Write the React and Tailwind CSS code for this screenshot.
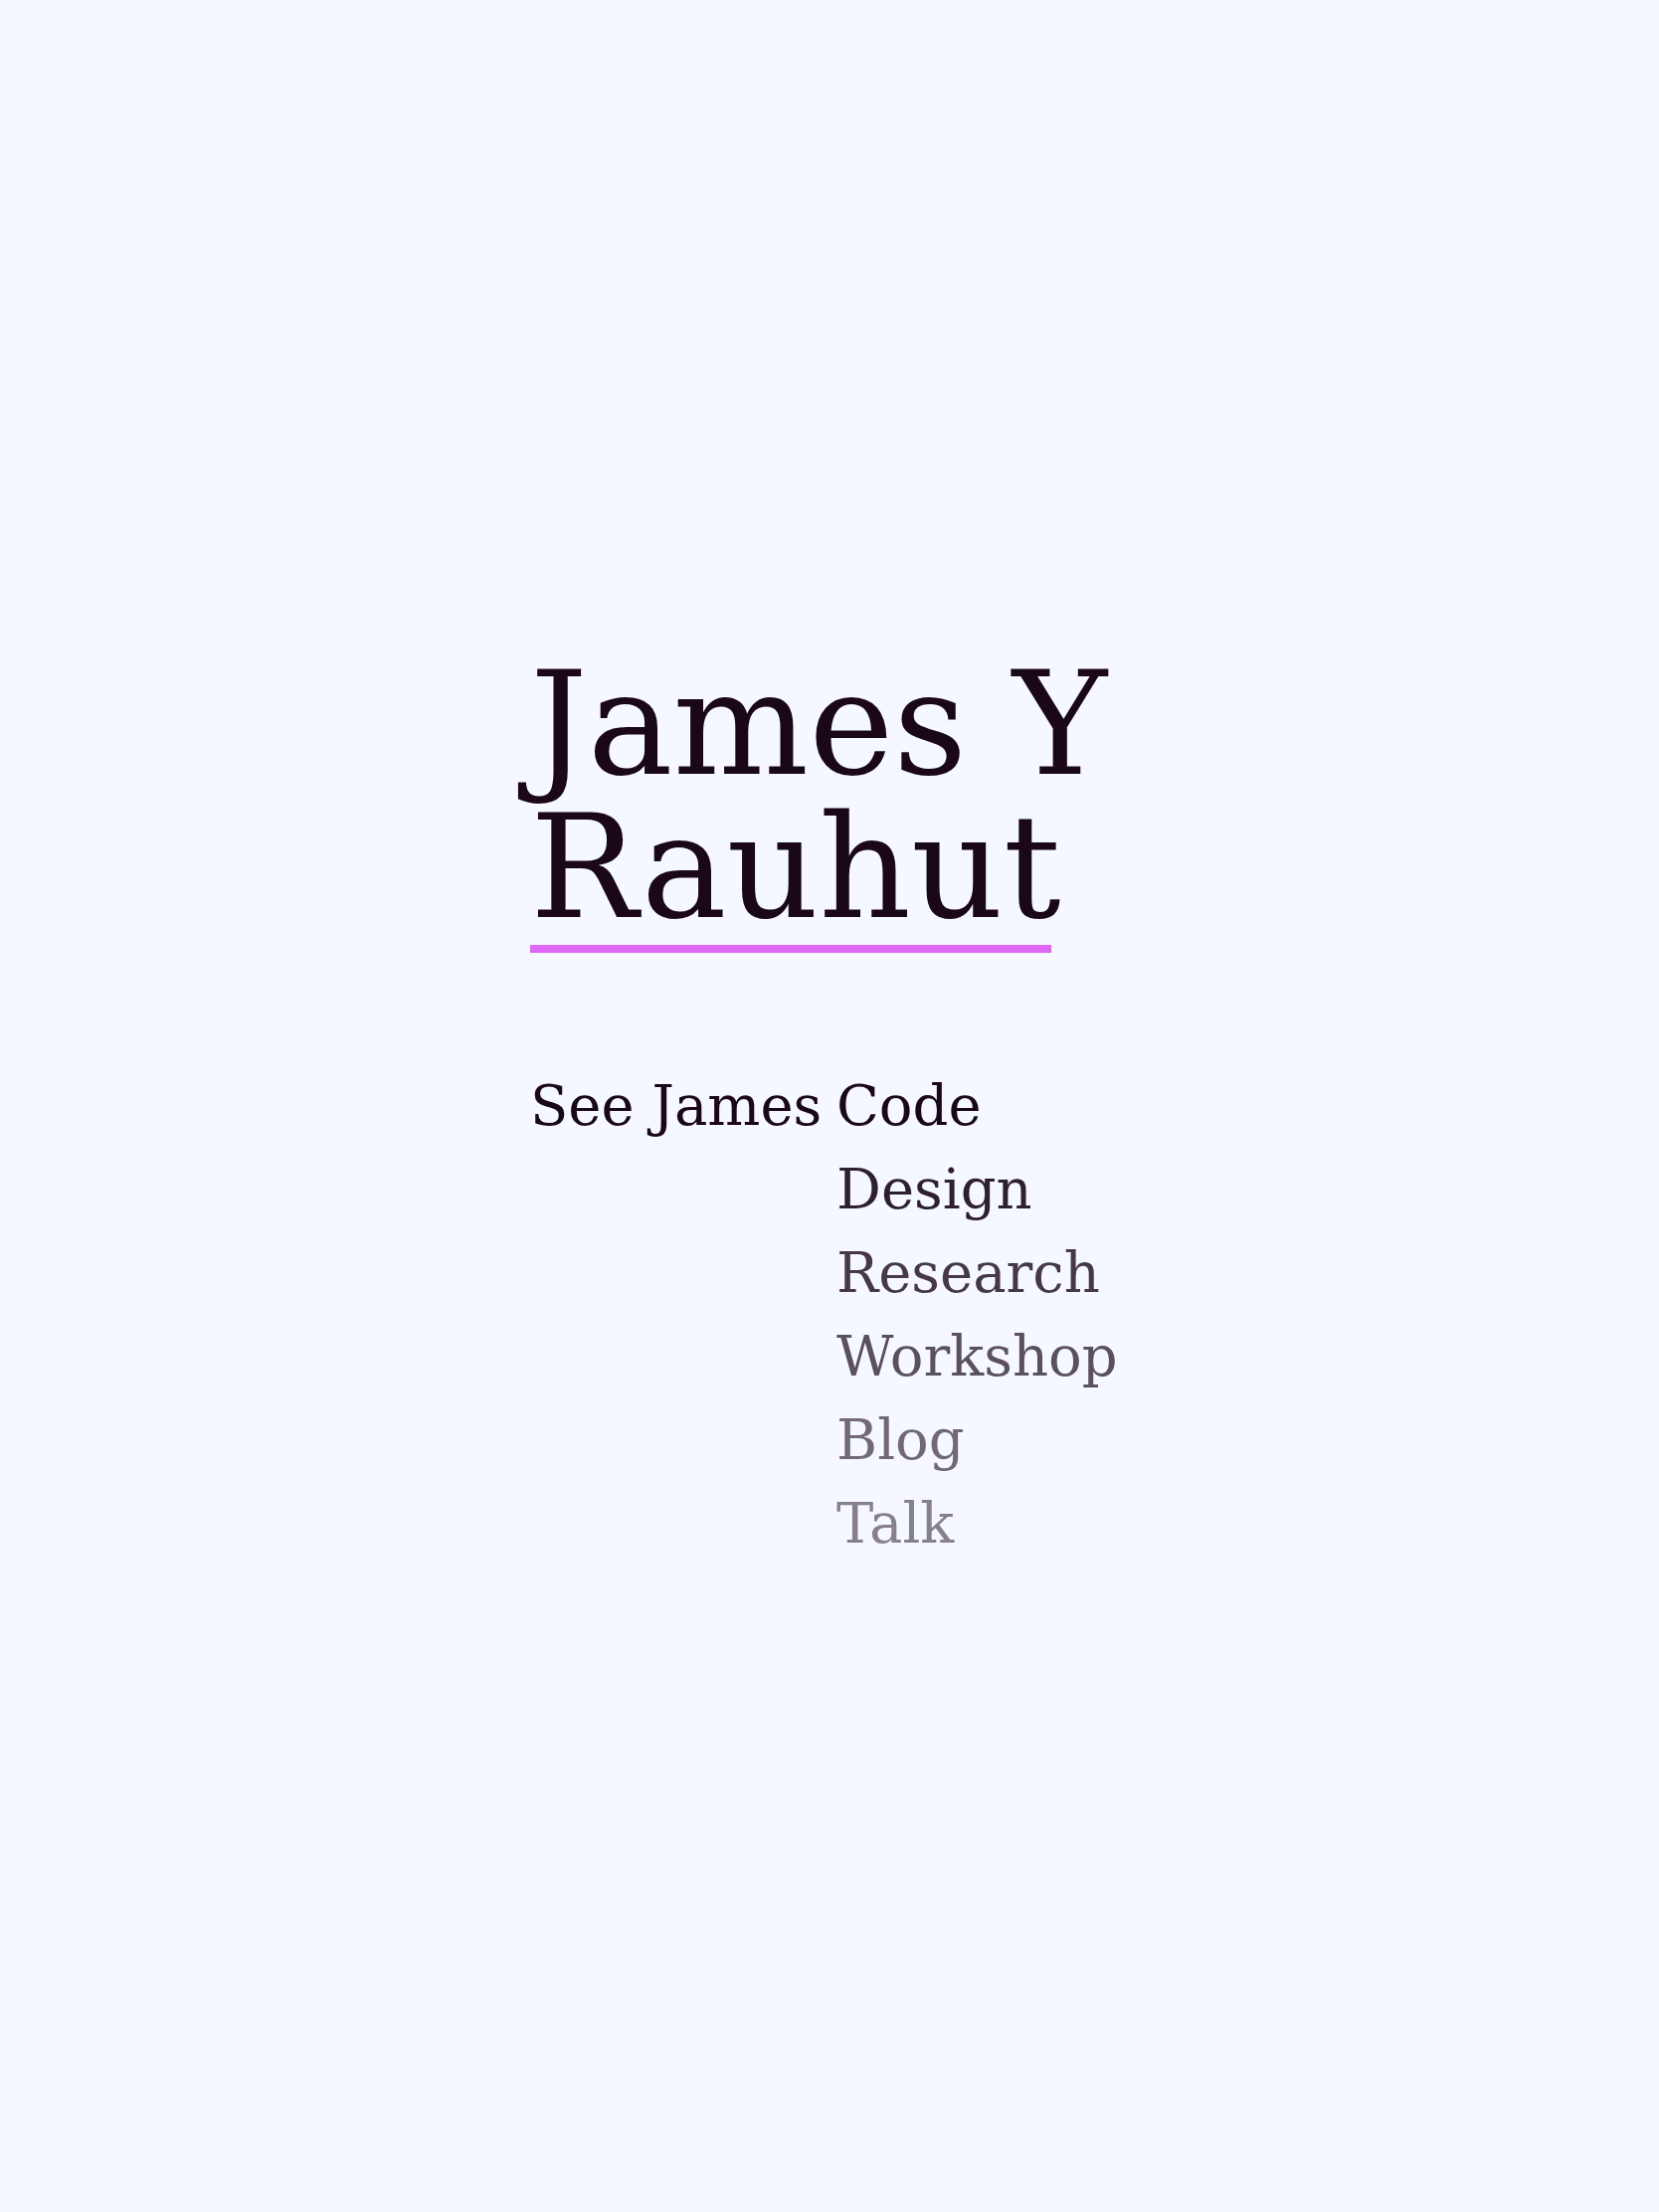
const links = [
  { label: "Code", tone: "text-[#1a0818]" },
  { label: "Design", tone: "text-[#1a0818]/90" },
  { label: "Research", tone: "text-[#1a0818]/80" },
  { label: "Workshop", tone: "text-[#1a0818]/70" },
  { label: "Blog", tone: "text-[#1a0818]/60" },
  { label: "Talk", tone: "text-[#1a0818]/50" },
];

export default function App() {
  return (
    <div className="min-h-screen bg-[#f5f9ff] font-['DejaVu_Serif','Liberation_Serif',serif] text-[#1a0818]">
      <main className="mx-auto w-[602px] pt-[656px] pb-[200px]">
        {/* Name */}
        <h1 className="text-[144px] leading-[144px] font-normal whitespace-nowrap">
          <span className="block">James Y</span>
          <span className="inline-block w-[524px] pb-[6px] border-b-[8px] border-[#e066f6]">Rauhut</span>
        </h1>

        {/* Nav */}
        <nav className="mt-[112px] grid grid-cols-[308px_auto] text-[56px] leading-[84px] whitespace-nowrap">
          <span>See James</span>
          <ul>
            {links.map((l) => (
              <li key={l.label}>
                <a href="#" className={l.tone}>{l.label}</a>
              </li>
            ))}
          </ul>
        </nav>
      </main>
    </div>
  );
}
